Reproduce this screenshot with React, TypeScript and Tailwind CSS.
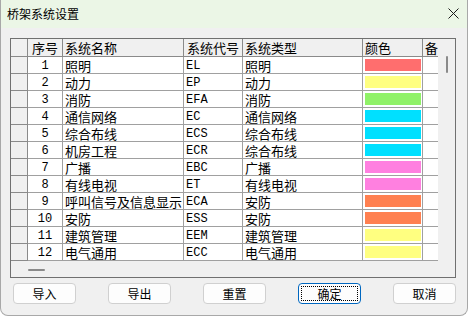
import React from "react";

type Row = { n: number; name: string; code: string; type: string; color: string };

const rows: Row[] = [
  { n: 1, name: "照明", code: "EL", type: "照明", color: "#ff6e6e" },
  { n: 2, name: "动力", code: "EP", type: "动力", color: "#ffff80" },
  { n: 3, name: "消防", code: "EFA", type: "消防", color: "#90f268" },
  { n: 4, name: "通信网络", code: "EC", type: "通信网络", color: "#00e0ff" },
  { n: 5, name: "综合布线", code: "ECS", type: "综合布线", color: "#00e0ff" },
  { n: 6, name: "机房工程", code: "ECR", type: "综合布线", color: "#00e0ff" },
  { n: 7, name: "广播", code: "EBC", type: "广播", color: "#ff80e0" },
  { n: 8, name: "有线电视", code: "ET", type: "有线电视", color: "#ff80e0" },
  { n: 9, name: "呼叫信号及信息显示", code: "ECA", type: "安防", color: "#ff8050" },
  { n: 10, name: "安防", code: "ESS", type: "安防", color: "#ff8050" },
  { n: 11, name: "建筑管理", code: "EEM", type: "建筑管理", color: "#ffff80" },
  { n: 12, name: "电气通用", code: "ECC", type: "电气通用", color: "#ffff80" },
];

const cjk = { fontFamily: '"Noto Sans CJK SC", "Noto Sans", sans-serif' };
const mono = { fontFamily: '"Liberation Mono", "DejaVu Sans Mono", monospace' };

function Btn({ label, focused }: { label: string; focused?: boolean }) {
  return (
    <div
      className={
        "relative w-[63px] h-[21px] rounded-[4px] bg-[#fdfdfd] border flex items-center justify-center text-[12px] text-black leading-none " +
        (focused ? "border-[#0067c0]" : "border-[#d0d0d0]")
      }
    >
      {focused && (
        <div className="absolute inset-[2px] border border-dotted border-black" />
      )}
      <span>{label}</span>
    </div>
  );
}

export default function App() {
  return (
    <div className="w-[469px] h-[318px] bg-white text-black" style={cjk}>
      <div className="w-[468px] h-[316px] bg-[#f0f0f0] border-x border-b border-[#a8a8a8] rounded-b-[8px] overflow-hidden flex flex-col">
        {/* title bar */}
        <div className="h-[28px] bg-[#ebf6e6] flex items-center justify-between pl-[6px] pr-[8px] shrink-0">
          <span className="text-[12px] leading-none">桥架系统设置</span>
          <svg width="11" height="11" viewBox="0 0 11 11" className="mb-[2px]">
            <path d="M0.5 0.5 L10.5 10.5 M10.5 0.5 L0.5 10.5" stroke="#1a1a1a" strokeWidth="1" />
          </svg>
        </div>

        {/* grid */}
        <div className="pl-[9px] pt-[10px]">
          <div className="w-[446px] h-[240px] border border-[#707070] flex flex-col">
            <div className="flex flex-1 min-h-0">
              <div className="w-[427px] flex flex-col bg-white">
                {/* header */}
                <div className="h-[18px] flex bg-[#f0f0f0] border-b border-[#8a8a8a] text-[13px] leading-none">
                  <div className="w-[17px] border-r border-[#8a8a8a]" />
                  <div className="w-[35px] border-r border-[#8a8a8a] flex items-center justify-center">序号</div>
                  <div className="w-[121px] border-r border-[#8a8a8a] flex items-center pl-[2px]">系统名称</div>
                  <div className="w-[59px] border-r border-[#8a8a8a] flex items-center pl-[3px]">系统代号</div>
                  <div className="w-[120px] border-r border-[#8a8a8a] flex items-center pl-[2px]">系统类型</div>
                  <div className="w-[60px] border-r border-[#8a8a8a] flex items-center pl-[2px]">颜色</div>
                  <div className="w-[15px] flex items-center pl-[2px] overflow-hidden whitespace-nowrap">备</div>
                </div>
                {rows.map((r) => (
                  <div key={r.n} className="h-[17px] flex text-[13px] leading-none">
                    <div className="w-[17px] bg-[#f0f0f0] border-r border-b border-[#8a8a8a]" />
                    <div
                      className="w-[35px] border-r border-b border-[#a0a0a0] flex items-center justify-center pt-[2px] text-[12px]"
                      style={mono}
                    >
                      {r.n}
                    </div>
                    <div className="w-[121px] border-r border-b border-[#a0a0a0] flex items-center pl-[2px] overflow-hidden whitespace-nowrap">
                      {r.name}
                    </div>
                    <div
                      className="w-[59px] border-r border-b border-[#a0a0a0] flex items-center pl-[2px] pt-[2px] text-[12px]"
                      style={mono}
                    >
                      {r.code}
                    </div>
                    <div className="w-[120px] border-r border-b border-[#a0a0a0] flex items-center pl-[2px]">
                      {r.type}
                    </div>
                    <div className="w-[60px] border-r border-b border-[#a0a0a0] flex items-center pl-[2px]">
                      <div className="w-[56px] h-[12px]" style={{ backgroundColor: r.color }} />
                    </div>
                    <div className="w-[15px] border-b border-[#a0a0a0]" />
                  </div>
                ))}
              </div>
              {/* vertical scrollbar */}
              <div className="w-[17px] bg-[#f0f0f0] pt-[17px] pl-[8px]">
                <div className="w-[2px] h-[17px] rounded-full bg-[#8a8a8a]" />
              </div>
            </div>
            {/* horizontal scrollbar */}
            <div className="h-[16px] bg-[#f0f0f0] pl-[17px] pt-[8px] shrink-0">
              <div className="w-[17px] h-[2px] rounded-full bg-[#8a8a8a]" />
            </div>
          </div>
        </div>

        {/* buttons */}
        <div className="pl-[12px] mt-[5px] flex gap-[32px]">
          <Btn label="导入" />
          <Btn label="导出" />
          <Btn label="重置" />
          <Btn label="确定" focused />
          <Btn label="取消" />
        </div>
      </div>
    </div>
  );
}
